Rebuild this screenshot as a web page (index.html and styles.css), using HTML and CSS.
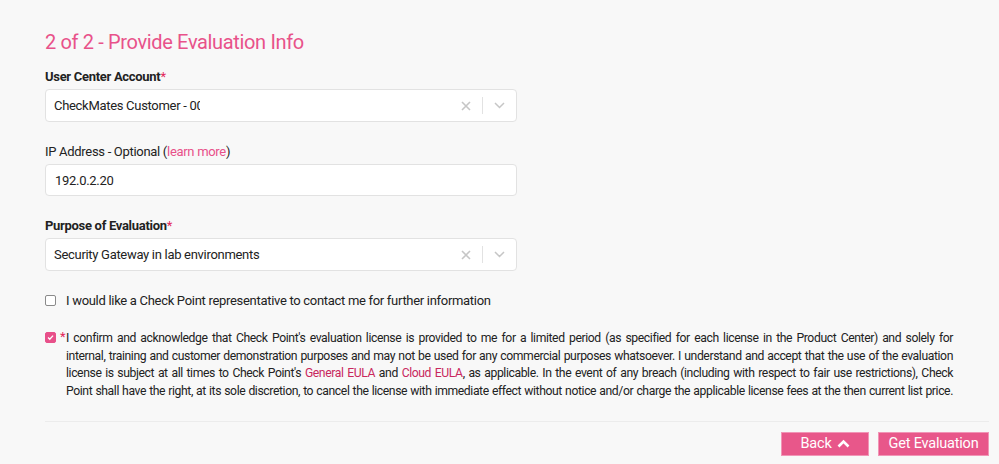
FILE: index.html
```html
<!DOCTYPE html>
<html>
<head>
<meta charset="utf-8">
<link rel="stylesheet" href="styles.css">
</head>
<body>
<div class="page">
  <h2 class="title">2 of 2 - Provide Evaluation Info</h2>

  <div class="field">
    <div class="label strong">User Center Account<span class="req">*</span></div>
    <div class="select">
      <div class="value"><span class="clip">CheckMates Customer - 0012345</span></div>
      <div class="ind clear">
        <svg width="10" height="10" viewBox="0 0 10 10"><path d="M1 1L9 9M9 1L1 9" stroke="#c6c6c6" stroke-width="1.6" fill="none"/></svg>
      </div>
      <div class="sep"></div>
      <div class="ind drop">
        <svg width="11" height="7" viewBox="0 0 11 7"><path d="M1 1L5.5 5.5L10 1" stroke="#c6c6c6" stroke-width="1.5" fill="none"/></svg>
      </div>
    </div>
  </div>

  <div class="field">
    <div class="label">IP Address - Optional (<a class="link">learn more</a>)</div>
    <div class="input">192.0.2.20</div>
  </div>

  <div class="field">
    <div class="label strong">Purpose of Evaluation<span class="req">*</span></div>
    <div class="select">
      <div class="value">Security Gateway in lab environments</div>
      <div class="ind clear">
        <svg width="10" height="10" viewBox="0 0 10 10"><path d="M1 1L9 9M9 1L1 9" stroke="#c6c6c6" stroke-width="1.6" fill="none"/></svg>
      </div>
      <div class="sep"></div>
      <div class="ind drop">
        <svg width="11" height="7" viewBox="0 0 11 7"><path d="M1 1L5.5 5.5L10 1" stroke="#c6c6c6" stroke-width="1.5" fill="none"/></svg>
      </div>
    </div>
  </div>

  <div class="check-row">
    <span class="box"></span>
    <span class="check-text">I would like a Check Point representative to contact me for further information</span>
  </div>

  <div class="confirm-row">
    <span class="box checked">
      <svg width="11" height="11" viewBox="0 0 11 11"><path d="M2.5 5.6L4.6 7.7L8.6 3.2" stroke="#fff" stroke-width="1.6" fill="none"/></svg>
    </span>
    <span class="req star">*</span>
    <p class="terms"><span class="ln">I confirm and acknowledge that Check Point's evaluation license is provided to me for a limited period (as specified for each license in the Product Center) and solely for</span> <span class="ln">internal, training and customer demonstration purposes and may not be used for any commercial purposes whatsoever. I understand and accept that the use of the evaluation</span> <span class="ln">license is subject at all times to Check Point's <a class="eula">General EULA</a> and <a class="eula">Cloud EULA</a>, as applicable. In the event of any breach (including with respect to fair use restrictions), Check</span> <span class="ln">Point shall have the right, at its sole discretion, to cancel the license with immediate effect without notice and/or charge the applicable license fees at the then current list price.</span></p>
  </div>

  <div class="divider"></div>

  <div class="actions">
    <button class="btn back">Back
      <svg width="13" height="9" viewBox="0 0 13 9"><path d="M1.5 7.5L6.5 2.5L11.5 7.5" stroke="#fff" stroke-width="2.6" fill="none"/></svg>
    </button>
    <button class="btn get">Get Evaluation</button>
  </div>
</div>
</body>
</html>
```

FILE: styles.css
```css
html, body {
  margin: 0;
  padding: 0;
  background: #f8f8f8;
}

body {
  font-family: "Roboto", "Liberation Sans", sans-serif;
  color: #222;
  font-size: 13px;
  letter-spacing: -0.3px;
}

.page {
  padding: 30px 10px 0 45px;
}

.title {
  margin: 0 0 13px 0;
  font-weight: normal;
  font-size: 20px;
  letter-spacing: -0.35px;
  line-height: 24px;
  color: #e8528a;
}

.field {
  margin-bottom: 20px;
}

.label {
  line-height: 19px;
  margin-bottom: 3px;
  color: #222;
}

.label.strong {
  font-weight: bold;
}

.req {
  color: #e3285a;
  font-weight: normal;
}

.link {
  color: #e8508a;
}

.select,
.input {
  background: #fff;
  border: 1px solid #e2e2e2;
  border-radius: 4px;
  box-sizing: border-box;
  width: 472px;
}

.select {
  height: 33px;
  display: flex;
  align-items: center;
}

.input {
  height: 32px;
  display: flex;
  align-items: center;
  padding-left: 9px;
  color: #222;
}

.value {
  flex: 1;
  padding-left: 8px;
  color: #222;
  white-space: nowrap;
  overflow: hidden;
}

.clip {
  display: inline-block;
  width: 146px;
  overflow: hidden;
  vertical-align: top;
}

.ind {
  display: flex;
  align-items: center;
  justify-content: center;
  height: 100%;
}

.clear {
  width: 32px;
}

.sep {
  width: 1px;
  height: 17px;
  background: #e2e2e2;
}

.drop {
  width: 33px;
}

.check-row {
  display: flex;
  align-items: center;
  line-height: 19px;
  margin-bottom: 20px;
}

.box {
  width: 11px;
  height: 11px;
  box-sizing: border-box;
  border: 1px solid #8a8a8a;
  border-radius: 2px;
  background: #fff;
  flex: none;
  display: flex;
  align-items: center;
  justify-content: center;
}

.check-text {
  margin-left: 10px;
}

.confirm-row {
  display: flex;
  align-items: flex-start;
  margin-top: 1px;
}

.confirm-row .box {
  margin-top: 2px;
}

.box.checked {
  background: #e8508a;
  border-color: #e8508a;
}

.star {
  margin-left: 4px;
  width: 6px;
  line-height: 13px;
}

.terms {
  margin: 0;
  width: 887px;
  font-size: 12.2px;
  letter-spacing: -0.4px;
  word-spacing: -1.5px;
  line-height: 17.7px;
  color: #222;
}

.terms .ln {
  display: block;
  text-align: justify;
  text-align-last: justify;
}

.eula {
  color: #c8285e;
}

.divider {
  height: 1px;
  background: #ececec;
  margin-top: 20px;
}

.actions {
  display: flex;
  justify-content: flex-end;
  gap: 9px;
  margin-top: 10px;
}

.btn {
  height: 24px;
  border: 1px solid #f195b6;
  background: #e8578a;
  color: #fff;
  font-family: "Roboto", "Liberation Sans", sans-serif;
  font-size: 14.5px;
  letter-spacing: -0.2px;
  padding: 0;
  display: flex;
  align-items: center;
  justify-content: center;
  gap: 5px;
}

.back {
  width: 88px;
}

.get {
  width: 111px;
}
```
